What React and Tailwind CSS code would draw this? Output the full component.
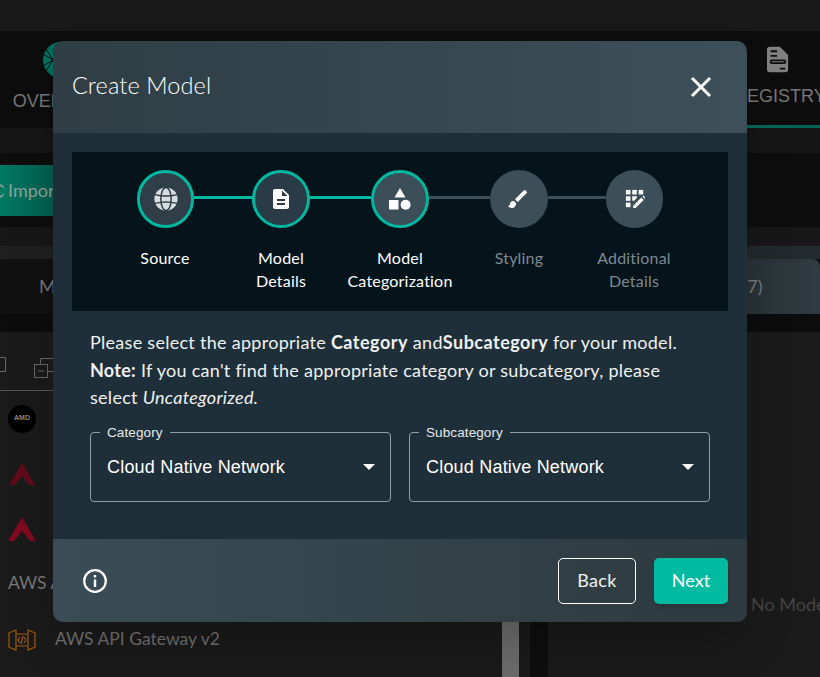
import React from 'react';

const qanelas = 'font-["Lato","Open_Sans",sans-serif]';
const arial = 'font-["Liberation_Sans",Arial,sans-serif]';

function Globe() {
  return (
    <svg width="24" height="24" viewBox="0 0 24 24" fill="none">
      <circle cx="12" cy="12" r="11.6" fill="#d7dde0" />
      <ellipse cx="12" cy="12" rx="5.2" ry="11.6" stroke="#2f3e47" strokeWidth="1.5" />
      <path d="M1 7.6Q12 10.6 23 7.6M1 16.4Q12 13.4 23 16.4" stroke="#2f3e47" strokeWidth="1.5" />
    </svg>
  );
}

function DocIcon() {
  return (
    <svg width="24" height="24" viewBox="0 0 24 24" fill="#fff">
      <path d="M14 2H6c-1.1 0-2 .9-2 2v16c0 1.1.9 2 2 2h12c1.1 0 2-.9 2-2V8l-6-6zm2 16H8v-2h8v2zm0-4H8v-2h8v2zm-3-5V3.5L18.5 9H13z" />
    </svg>
  );
}

function Shapes() {
  return (
    <svg width="24" height="24" viewBox="0 0 24 24" fill="#fff">
      <path d="M12 1 6.5 10.5h11z" />
      <rect x="1" y="13" width="9.5" height="9.5" />
      <circle cx="17.6" cy="17.8" r="5" />
    </svg>
  );
}

function Brush() {
  return (
    <svg width="24" height="24" viewBox="0 0 24 24" fill="#fff" className="-ml-[2px]">
      <path d="M7 14c-1.66 0-3 1.34-3 3 0 1.31-1.16 2-2 2 .92 1.22 2.49 2 4 2 2.21 0 4-1.79 4-4 0-1.66-1.34-3-3-3zm13.71-9.37-1.34-1.34a1 1 0 0 0-1.41 0L9 12.25 11.75 15l8.96-8.96a1 1 0 0 0 0-1.41z" />
    </svg>
  );
}

function GridEdit() {
  return (
    <svg width="20" height="20" viewBox="0 0 22 22" fill="#fff">
      <rect x="1" y="1" width="5" height="5" />
      <rect x="8" y="1" width="5" height="5" />
      <rect x="15" y="1" width="5" height="5" />
      <rect x="1" y="8" width="5" height="5" />
      <path d="M8 8h5v2l-3 3H8z" />
      <rect x="1" y="15" width="5" height="5" />
      <path d="M9 21v-2.6l9-9 2.6 2.6-9 9zM19.2 8.2l1-1 2.6 2.6-1 1z" />
    </svg>
  );
}

function Step({ icon, active, fill, size = 'w-[58px] h-[58px]' }) {
  const border = active ? 'border-[3px] border-[#00b8a0]' : '';
  return (
    <div className={`${size} shrink-0 rounded-full flex items-center justify-center ${border} ${fill}`}>
      {icon}
    </div>
  );
}

function Line({ w, on }) {
  return <div className={`h-[3px] mb-[3px] ${w} ${on ? 'bg-[#00b8a0]' : 'bg-[#3c4f59]'}`} />;
}

function Label({ w, off, children }) {
  return (
    <div className={`${w} shrink-0 text-center text-[16px] leading-[23px] tracking-[0.2px] ${off ? 'text-[#7d8a91]' : 'text-white'}`}>
      {children}
    </div>
  );
}

function SelectBox({ label }) {
  return (
    <div className={`relative flex-1 h-[70px] rounded-[4px] border border-[#8d9ea6] flex items-center justify-between pt-[1px] pl-[16px] pr-[15px] ${arial}`}>
      <span className="absolute -top-[8px] left-[9px] px-[7px] bg-[#1f2f3a] text-[13.5px] leading-[16px] tracking-[0.1px] text-[#e4e8ea]">{label}</span>
      <span className="text-[18px] tracking-[0.2px] text-white">Cloud Native Network</span>
      <svg width="12" height="6" viewBox="0 0 12 6" fill="#fff"><path d="M0 0h12L6 6z" /></svg>
    </div>
  );
}

function CreateModel() {
  return (
    <div className={`absolute left-[53px] top-[41px] w-[694px] rounded-[10px] overflow-hidden shadow-2xl text-white ${qanelas}`}>
      <div className="h-[92px] flex items-center justify-between pl-[19px] pr-[34px] bg-gradient-to-r from-[#2f3e45] to-[#3d4f59]">
        <div className="text-[23.5px] font-light tracking-[0.1px] -mt-[3px]">Create Model</div>
        <svg width="24" height="24" viewBox="0 0 24 24" stroke="#fff" strokeWidth="3" fill="none"><path d="M3 3l18 18M21 3 3 21" /></svg>
      </div>

      <div className="h-[406px] bg-[#1f2f3a] pt-[19px] px-[19px]">
        <div className="h-[159px] bg-[#05141b] pt-[18px] pl-[65px]">
          <div className="flex items-center">
            <Step active size="w-[57px] h-[58px]" fill="bg-[#2f3e47]" icon={<Globe />} />
            <Line w="w-[58px]" on />
            <Step active fill="bg-[#2a3a46]" icon={<DocIcon />} />
            <Line w="w-[61px]" on />
            <Step active fill="bg-[#3c4f59]" icon={<Shapes />} />
            <Line w="w-[61px]" />
            <Step fill="bg-[#3c4f59]" icon={<Brush />} />
            <Line w="w-[58px]" />
            <Step size="w-[57px] h-[58px]" fill="bg-[#3c4f59]" icon={<GridEdit />} />
          </div>
          <div className="flex -ml-[29px] mt-[18px]">
            <Label w="w-[114px]">Source</Label>
            <Label w="w-[118px]">Model<br />Details</Label>
            <Label w="w-[120px]">Model<br />Categorization</Label>
            <Label w="w-[118px]" off>Styling</Label>
            <Label w="w-[112px]" off>Additional<br />Details</Label>
          </div>
        </div>

        <p className="mt-[18px] ml-[18px] w-[620px] text-[18px] leading-[27.5px] tracking-[0.28px] text-[#eef1f2]">
          Please select the appropriate <b className="tracking-[0.5px]">Category</b> and<b className="tracking-[0.5px]">Subcategory</b> for your model.<br />
          <b>Note:</b> If you can't find the appropriate category or subcategory, please<br />
          select <i>Uncategorized.</i>
        </p>

        <div className="mt-[20px] mx-[18px] flex gap-[18px]">
          <SelectBox label="Category" />
          <SelectBox label="Subcategory" />
        </div>
      </div>

      <div className="h-[83px] flex items-center justify-between pl-[30px] pr-[19px] bg-gradient-to-r from-[#3a4c56] to-[#2d3a3f]">
        <svg width="24" height="24" viewBox="0 0 24 24" fill="none" stroke="#fff">
          <circle cx="12" cy="12" r="10.8" strokeWidth="2.2" />
          <path d="M12 10.5V18" strokeWidth="2.4" />
          <path d="M12 6v2.6" strokeWidth="2.4" />
        </svg>
        <div className="flex gap-[18px]">
          <button className="w-[78px] h-[46px] rounded-[5px] border border-white text-[18px] tracking-[0.3px] text-[#eef1f2]">Back</button>
          <button className="w-[74px] h-[46px] rounded-[5px] bg-[#00bba0] text-[18px] text-white shadow-md">Next</button>
        </div>
      </div>
    </div>
  );
}

export default function App() {
  return (
    <div className={`relative w-[820px] h-[677px] overflow-hidden bg-[#1a1a1a] ${qanelas}`}>
      <div className="h-[31px] bg-[#191919]" />

      {/* nav tabs, mostly hidden behind the modal */}
      <div className="h-[97px] bg-[#0d0d0d] flex justify-between">
        <div className="w-[122px] flex flex-col items-center pt-[11px]">
          <svg width="36" height="36" viewBox="0 0 36 36">
            <circle cx="18" cy="18" r="18" fill="#00705f" />
            <path d="M0 12l10 6-10 6M10 18 3 7M10 18 3 29M10 6l6 12-6 12" stroke="#0d0d0d" strokeWidth="1" fill="none" />
          </svg>
          <div className={`text-[18px] text-[#777] mt-[10px] ${arial}`}>OVERVIEW</div>
        </div>
        <div className="w-[73px] border-b-[3px] border-[#00665a] relative">
          <svg width="22" height="27" viewBox="0 0 24 28" className="absolute left-[20px] top-[15px]" fill="#808080">
            <path d="M3 0h11l9 9v16a3 3 0 0 1-3 3H3a3 3 0 0 1-3-3V3a3 3 0 0 1 3-3zm1 4v2h7V4zm0 5v2h7V9zm1 5a2 2 0 0 0-2 2v1a2 2 0 0 0 2 2h14a2 2 0 0 0 2-2v-1a2 2 0 0 0-2-2zm0 2h14v1H5zm9 7v2h6v-2z" />
          </svg>
          <div className={`absolute -left-[13px] top-[52px] text-[18px] text-[#777] whitespace-nowrap ${arial}`}>REGISTRY</div>
        </div>
      </div>

      <div className="h-[25px] bg-[#161616]" />

      {/* toolbar row */}
      <div className="h-[74px] bg-[#0d0d0d] pt-[12px]">
        <div className="w-[60px] h-[51px] rounded-r-[4px] bg-gradient-to-r from-[#007a64] to-[#005a4a] flex items-center gap-[4px] text-[18px] text-[#8fa19d] overflow-hidden whitespace-nowrap">
          <svg width="4" height="14" viewBox="0 0 4 14" fill="none" stroke="#8fa19d" strokeWidth="1.3" className="shrink-0">
            <path d="M-3 5 1 1l3 3M-3 9l4 4 3-3" />
          </svg>
          <span>Import</span>
        </div>
      </div>

      <div className="h-[19px] bg-[#171717]" />
      <div className="h-[13px] bg-gradient-to-r from-[#202020] to-[#23292d]" />

      <div className="h-[55px] bg-[#111] flex justify-between items-center">
        <span className="ml-[39px] text-[18px] text-[#777]">Models</span>
        <div className="w-[73px] h-full rounded-tr-[8px] bg-gradient-to-r from-[#283136] to-[#303c42] flex items-center text-[18px] text-[#777] overflow-hidden">
          <span className="-ml-[15px]">(57)</span>
        </div>
      </div>
      <div className="h-[18px] bg-[#0c0c0c]" />

      {/* list and detail area */}
      <div className="flex h-[345px]">
        <div className="w-[530px] shrink-0 relative">
          <div className="h-[59px] border-b border-[#555] flex items-end pb-[12px]">
            <svg width="6" height="18" viewBox="0 0 6 18" fill="none" stroke="#666" className="mb-[3px]">
              <path d="M-2 .5h7.5v14H-2" />
            </svg>
            <svg width="20" height="20" viewBox="0 0 20 20" fill="none" stroke="#666" className="ml-[28px]">
              <path d="M6.5 6V.5h13v13H13.5" />
              <rect x=".5" y="6.5" width="13" height="13" />
              <path d="M4 13h6" />
            </svg>
          </div>
          <div className="h-[55px] pl-[8px] flex items-center">
            <div className={`w-[28px] h-[28px] rounded-full bg-black flex items-center justify-center text-[7px] font-bold text-[#888] ${arial}`}>AMD</div>
          </div>
          <div className="h-[55px] pl-[9px] flex items-center">
            <svg width="26" height="22" viewBox="0 0 26 22"><path d="M13 0l13 22h-6L13 13 6 22H0z" fill="#5f0c1c" /></svg>
          </div>
          <div className="h-[55px] pl-[8px] flex items-center">
            <svg width="28" height="24" viewBox="0 0 28 24"><path d="M14 0l14 24h-6l-8-10-8 10H0z" fill="#7d0a20" /></svg>
          </div>
          <div className="h-[55px] pl-[8px] flex items-center text-[17.5px] text-[#777]">AWS API Gateway</div>
          <div className="h-[55px] pl-[8px] pt-[2px] flex items-center gap-[19px]">
            <svg width="28" height="28" viewBox="0 0 28 28" fill="none" stroke="#9a5a0c" strokeWidth="1.2">
              <path d="M8 4 1 7v14l7 3zM20 4l7 3v14l-7 3zM8 8h12M8 20h12" />
              <path d="M12 11l-2 3 2 3M16 11l2 3-2 3M15 10l-2 8" />
            </svg>
            <span className="text-[17.5px] text-[#6f6f6f]">AWS API Gateway v2</span>
          </div>
          <div className="absolute right-[11px] bottom-0 w-[17px] h-[60px] bg-[#6b6b6b]" />
        </div>
        <div className="w-[18px] shrink-0 bg-[#0e0e0e]" />
        <div className="flex-1 min-w-0 pt-[259px] pl-[203px] text-[18px] text-[#444] whitespace-nowrap overflow-hidden">No Models</div>
      </div>

      <CreateModel />
    </div>
  );
}
